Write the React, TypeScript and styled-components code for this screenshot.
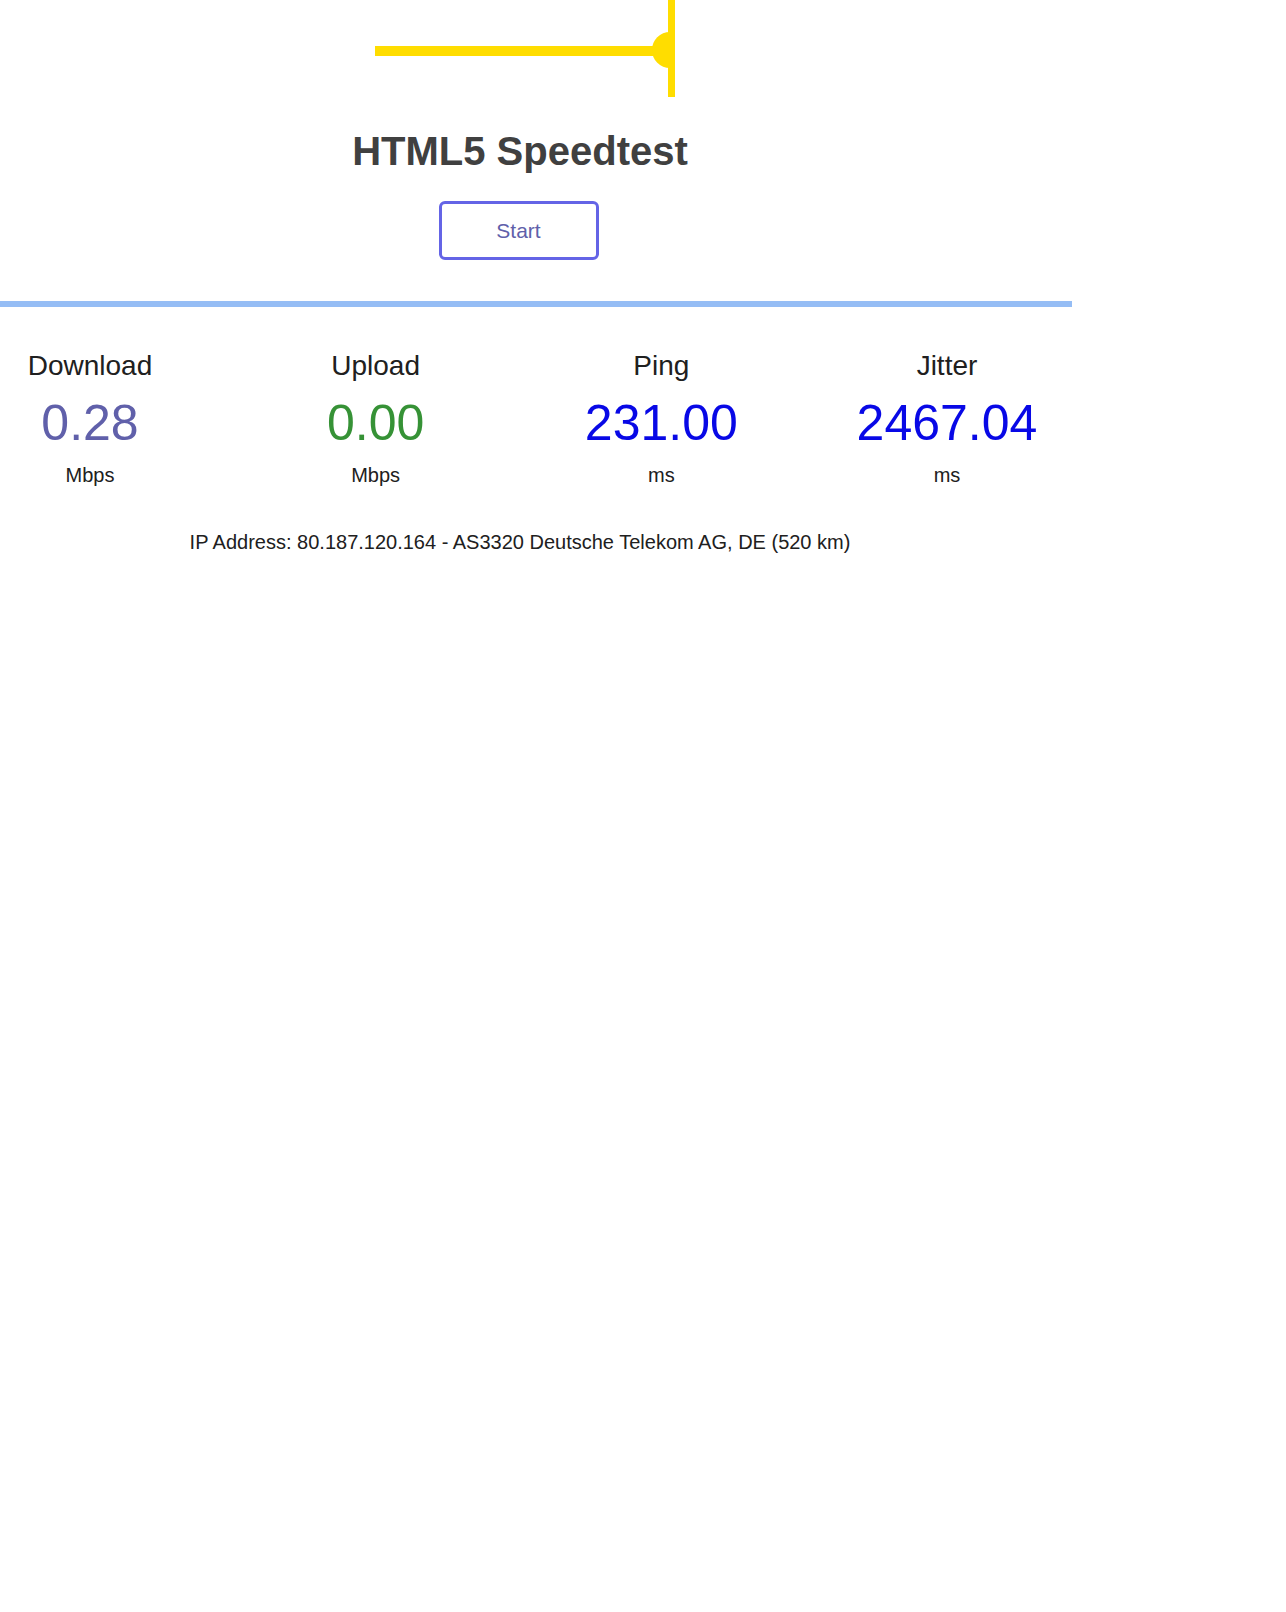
import React from 'react'
import styled, {createGlobalStyle} from 'styled-components'

interface IStat {
    label: string
    value: string
    unit: string
    color: string
}

const stats: IStat[] = [
    {label: 'Download', value: '0.28', unit: 'Mbps', color: '#6060aa'},
    {label: 'Upload', value: '0.00', unit: 'Mbps', color: '#369236'},
    {label: 'Ping', value: '231.00', unit: 'ms', color: '#0808e6'},
    {label: 'Jitter', value: '2467.04', unit: 'ms', color: '#0808e6'},
]

const App: React.FC = () => {
    return (
        <>
            <GlobalStyle/>
            <Page>
                <Gauge width="1040" height="100" viewBox="0 0 1040 100">
                    <rect x="375" y="46" width="296" height="10" fill="#ffdd00"/>
                    <path d="M 670 32 A 18 18 0 0 0 670 68 Z" fill="#ffdd00"/>
                    <rect x="668" y="0" width="7" height="97" fill="#ffdd00"/>
                </Gauge>

                <Title>HTML5 Speedtest</Title>
                <StartButton type="button">Start</StartButton>

                <Divider/>

                <StatsRow>
                    {stats.map(stat => (
                        <Stat key={stat.label}>
                            <StatLabel>{stat.label}</StatLabel>
                            <StatValue $color={stat.color}>{stat.value}</StatValue>
                            <StatUnit>{stat.unit}</StatUnit>
                        </Stat>
                    ))}
                </StatsRow>

                <IpInfo>IP Address: 80.187.120.164 - AS3320 Deutsche Telekom AG, DE (520 km)</IpInfo>
            </Page>
        </>
    )
}

export default App

const GlobalStyle = createGlobalStyle`
    body {
        margin: 0;
        background: #ffffff;
        font-family: "Liberation Sans", Arial, sans-serif;
    }
`

const Page = styled.div`
    width: 1040px;
    display: flex;
    flex-direction: column;
    align-items: center;
`

const Gauge = styled.svg`
    display: block;
`

const Title = styled.h1`
    margin: 28px 0 0;
    font-size: 40px;
    line-height: 46px;
    font-weight: bold;
    color: #404040;
`

const StartButton = styled.button`
    margin: 27px 3px 0 0;
    box-sizing: border-box;
    width: 160px;
    height: 59px;
    border: 3px solid #6464e6;
    border-radius: 6px;
    background: #ffffff;
    color: #6060aa;
    font-family: "Liberation Sans", Arial, sans-serif;
    font-size: 21px;
    cursor: pointer;
`

const Divider = styled.div`
    align-self: flex-start;
    margin-top: 41px;
    width: 1072px;
    height: 6px;
    background: #95bdf5;
`

const StatsRow = styled.div`
    align-self: flex-start;
    margin-top: 44px;
    width: 1037px;
    display: flex;
    justify-content: space-between;
`

const Stat = styled.div`
    width: 180px;
    display: flex;
    flex-direction: column;
    align-items: center;
    text-align: center;
`

const StatLabel = styled.div`
    font-size: 28px;
    line-height: 30px;
    color: #202020;
`

const StatValue = styled.div<{ $color: string }>`
    margin-top: 14px;
    font-size: 50px;
    line-height: 56px;
    color: ${p => p.$color};
    white-space: nowrap;
`

const StatUnit = styled.div`
    margin-top: 12px;
    font-size: 20px;
    line-height: 24px;
    color: #202020;
`

const IpInfo = styled.div`
    margin-top: 43px;
    font-size: 20px;
    line-height: 24px;
    color: #202020;
`
